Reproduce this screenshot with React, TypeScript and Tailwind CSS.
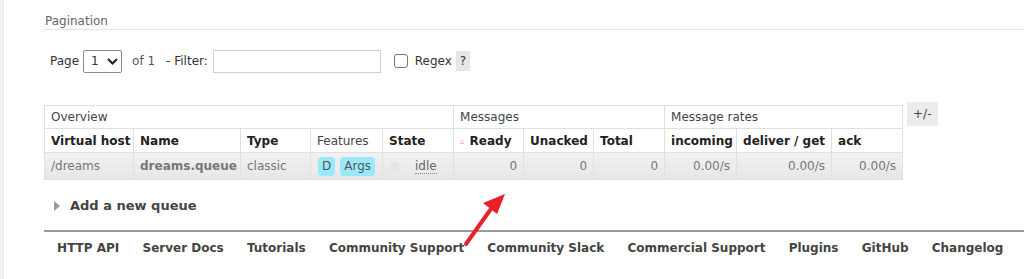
import React from "react";

const font = { fontFamily: '"DejaVu Sans", Verdana, sans-serif' };

const footerLinks = [
  "HTTP API",
  "Server Docs",
  "Tutorials",
  "Community Support",
  "Community Slack",
  "Commercial Support",
  "Plugins",
  "GitHub",
  "Changelog",
];

const colWidths = [89, 107, 70, 72, 71, 70, 70, 71, 72, 95, 71];

const th = "border border-[#e0e0e0] px-[6px] h-[24px] text-left font-bold text-[#222] whitespace-nowrap overflow-hidden";
const grp = "border border-[#e0e0e0] px-[6px] h-[23px] text-left font-normal text-[#444]";
const td = "border border-[#e0e0e0] px-[6px] h-[27px] text-[#777] whitespace-nowrap overflow-hidden";

function QueueTable() {
  return (
    <div className="flex items-start gap-[4px]">
      <table className="border-collapse table-fixed w-[858px] text-[12px]">
        <colgroup>
          {colWidths.map((w, i) => (
            <col key={i} style={{ width: w }} />
          ))}
        </colgroup>
        <thead>
          <tr className="bg-white">
            <th colSpan={5} className={grp}>Overview</th>
            <th colSpan={3} className={grp}>Messages</th>
            <th colSpan={3} className={grp}>Message rates</th>
          </tr>
          <tr className="bg-white">
            <th className={th}>Virtual host</th>
            <th className={th}>Name</th>
            <th className={th}>Type</th>
            <th className={`${th} !font-normal !text-[#444]`}>Features</th>
            <th className={th}>State</th>
            <th className={th}>
              <span className="text-[#f59a7a] text-[9px] mr-[5px] align-[1px]">▵</span>Ready
            </th>
            <th className={th}>Unacked</th>
            <th className={th}>Total</th>
            <th className={th}>incoming</th>
            <th className={th}>deliver / get</th>
            <th className={th}>ack</th>
          </tr>
        </thead>
        <tbody>
          <tr className="bg-gradient-to-b from-[#f2f2f2] to-[#e6e6e6]">
            <td className={td}>/dreams</td>
            <td className={`${td} font-bold text-[#333]`}>dreams.queue</td>
            <td className={td}>classic</td>
            <td className={`${td} px-[7px]`}>
              <div className="flex items-center gap-[5px] text-[#555]">
                <span className="bg-[#99e8fb] rounded-[4px] px-[4px] h-[19px] leading-[19px]">D</span>
                <span className="bg-[#99e8fb] rounded-[4px] px-[4px] h-[19px] leading-[19px]">Args</span>
              </div>
            </td>
            <td className={td}>
              <div className="flex items-center">
                <span className="w-[9px] h-[9px] bg-[#e6e6e6] ml-px" />
                <span className="ml-[16px] text-[#666] border-b border-dotted border-[#888] leading-[14px]">idle</span>
              </div>
            </td>
            <td className={`${td} text-right`}>0</td>
            <td className={`${td} text-right`}>0</td>
            <td className={`${td} text-right`}>0</td>
            <td className={`${td} text-right`}>0.00/s</td>
            <td className={`${td} text-right`}>0.00/s</td>
            <td className={`${td} text-right`}>0.00/s</td>
          </tr>
        </tbody>
      </table>
      <div className="mt-[-3px] bg-[#ececec] text-[#444] text-[12px] px-[6px] h-[24px] leading-[24px]">+/-</div>
    </div>
  );
}

export default function App() {
  return (
    <div className="relative w-[1024px] h-[279px] bg-white overflow-hidden flex" style={font}>
      <div className="w-[4px] shrink-0 bg-[#f1f1f1] border-r border-[#e8e8e8]" />
      <div className="flex-1 min-w-0 pl-[40px] pt-[13px]">
        <div className="text-[12px] leading-[16px] text-[#666] pl-px border-b border-[#e4e4e4]">Pagination</div>

        <div className="flex items-center pl-[6px] mt-[19px] text-[12px] text-[#333] h-[24px]">
          <span>Page</span>
          <div className="ml-[4px] w-[39px] h-[23px] border border-[#8a8a8a] rounded-[2px] flex items-center pl-[7px] gap-[8px]">
            <span>1</span>
            <svg width="11" height="7" viewBox="0 0 11 7">
              <path d="M1 1l4.5 4.5L10 1" fill="none" stroke="#222" strokeWidth="2" />
            </svg>
          </div>
          <span className="ml-[10px] text-[#555]">of 1</span>
          <span className="ml-[11px]">- Filter:</span>
          <div className="ml-[5px] w-[168px] h-[23px] border border-[#cfcfcf]" />
          <span className="ml-[13px] w-[14px] h-[14px] border border-[#777] rounded-[3px]" />
          <span className="ml-[7px]">Regex</span>
          <span className="ml-[4px] bg-[#e6e6e6] w-[14px] h-[20px] flex items-center justify-center text-[#333]">?</span>
        </div>

        <div className="mt-[32px]">
          <QueueTable />
        </div>

        <div className="flex items-center mt-[18px] h-[16px] pl-[10px] text-[13px] font-bold text-[#444]">
          <svg width="6" height="10" viewBox="0 0 6 10" className="mr-[10px]">
            <path d="M0 0L6 5L0 10Z" fill="#999" />
          </svg>
          Add a new queue
        </div>

        <div className="mt-[16px] border-t-2 border-[#999] flex pl-[1.5px] pt-[7px] text-[12px] font-bold text-[#444]">
          {footerLinks.map((l) => (
            <span key={l} className="px-[11.6px] whitespace-nowrap">
              {l}
            </span>
          ))}
        </div>
      </div>

      <svg className="absolute left-0 top-0 pointer-events-none" width="1024" height="279">
        <path d="M466 244L493 206" stroke="#e8202a" strokeWidth="4" strokeLinecap="round" />
        <path d="M505 194L483 203L497 214Z" fill="#e8202a" />
      </svg>
    </div>
  );
}
